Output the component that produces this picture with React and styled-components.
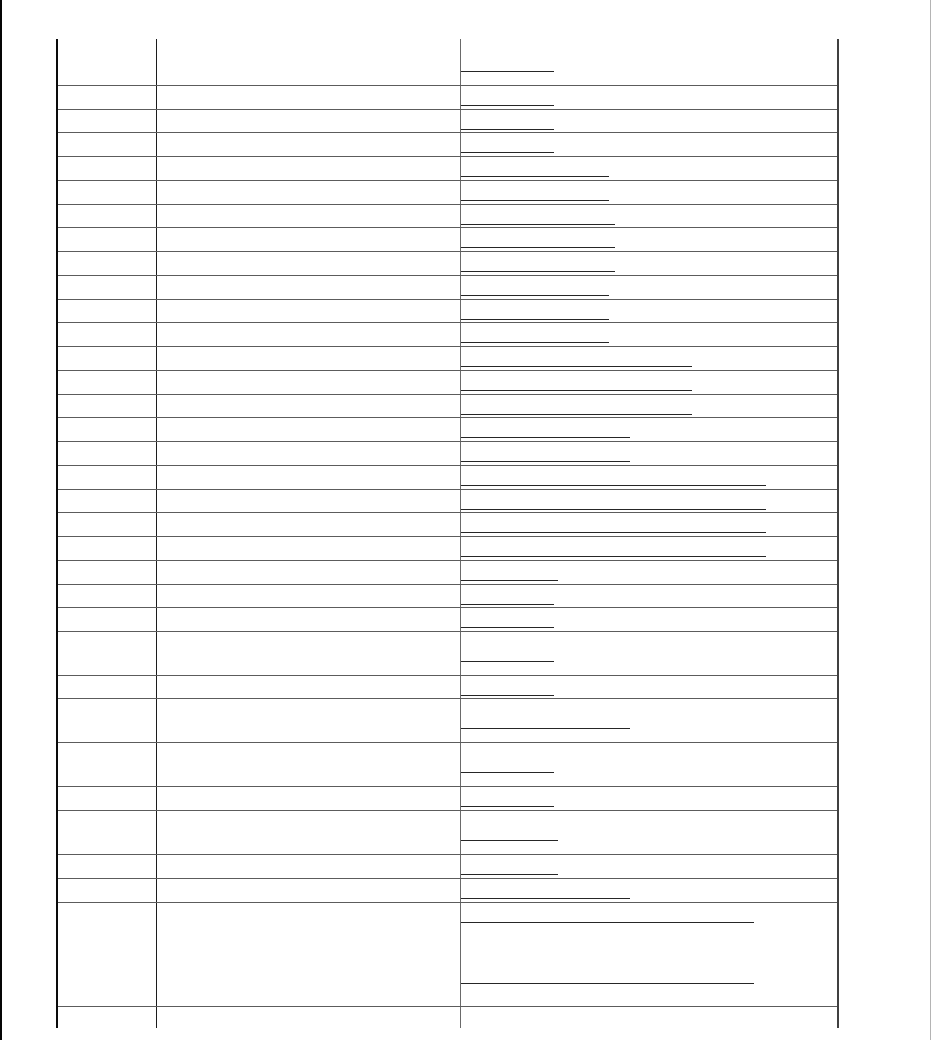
import React from "react";
import styled, { createGlobalStyle } from "styled-components";

const Global = createGlobalStyle`
  html, body { margin: 0; padding: 0; background: #fff; }
  body { font-family: "Liberation Serif", "Times New Roman", serif; }
`;

const Page = styled.div`
  box-sizing: border-box;
  width: 931px;
  height: 1040px;
  overflow: hidden;
  border-left: 2px solid #050505;
  border-right: 1px solid #b4b4b4;
  padding: 39px 0 0 54px;
`;

const Table = styled.div`
  box-sizing: border-box;
  width: 783px;
  border-left: 2px solid #0a0a0a;
  border-right: 2px solid #404040;
  display: flex;
  flex-direction: column;
`;

const Row = styled.div`
  box-sizing: border-box;
  display: grid;
  grid-template-columns: 99px 304px 376px;
  height: ${(p) => p.$h}px;
  border-top: ${(p) => (p.$first ? "none" : "1px solid #5c5c5c")};
`;

const KeyCell = styled.div`
  border-right: 1px solid #1c1c1c;
`;

const DescCell = styled.div`
  border-right: 1px solid #6a6a6a;
`;

const LinkCell = styled.div`
  display: flex;
  flex-direction: column;
  align-items: flex-start;
`;

const Link = styled.a`
  display: block;
  width: ${(p) => p.$w}px;
  height: 0;
  border-bottom: 1px solid #262626;
  margin-top: ${(p) => p.$mt}px;
  text-decoration: underline;
  color: #000;
`;

// row: [height, [ [offsetFromRowTop, width], ... ]]
const rows = [
  [46, [[32, 93]]],
  [24, [[20, 93]]],
  [23, [[20, 93]]],
  [24, [[20, 93]]],
  [24, [[20, 148]]],
  [24, [[20, 148]]],
  [23, [[20, 154]]],
  [24, [[20, 154]]],
  [24, [[20, 154]]],
  [24, [[20, 148]]],
  [23, [[20, 148]]],
  [24, [[20, 148]]],
  [24, [[20, 231]]],
  [24, [[20, 231]]],
  [23, [[20, 231]]],
  [24, [[20, 169]]],
  [24, [[20, 169]]],
  [24, [[20, 305]]],
  [23, [[20, 305]]],
  [24, [[20, 305]]],
  [24, [[20, 305]]],
  [24, [[20, 97]]],
  [23, [[20, 93]]],
  [24, [[20, 93]]],
  [44, [[30, 93]]],
  [23, [[20, 93]]],
  [44, [[30, 169]]],
  [44, [[30, 93]]],
  [24, [[20, 93]]],
  [44, [[30, 97]]],
  [24, [[20, 97]]],
  [24, [[20, 169]]],
  [104, [[20, 293], [81, 293]]],
  [22, []],
];

export default function App() {
  return (
    <>
      <Global />
      <Page>
        <Table>
          {rows.map(([h, links], i) => {
            const first = i === 0;
            let prev = first ? 0 : 1;
            return (
              <Row key={i} $h={h} $first={first}>
                <KeyCell />
                <DescCell />
                <LinkCell>
                  {links.map(([off, w], j) => {
                    const mt = off - prev;
                    prev = off + 1;
                    return <Link key={j} href="#" $w={w} $mt={mt} aria-hidden="true" />;
                  })}
                </LinkCell>
              </Row>
            );
          })}
        </Table>
      </Page>
    </>
  );
}
